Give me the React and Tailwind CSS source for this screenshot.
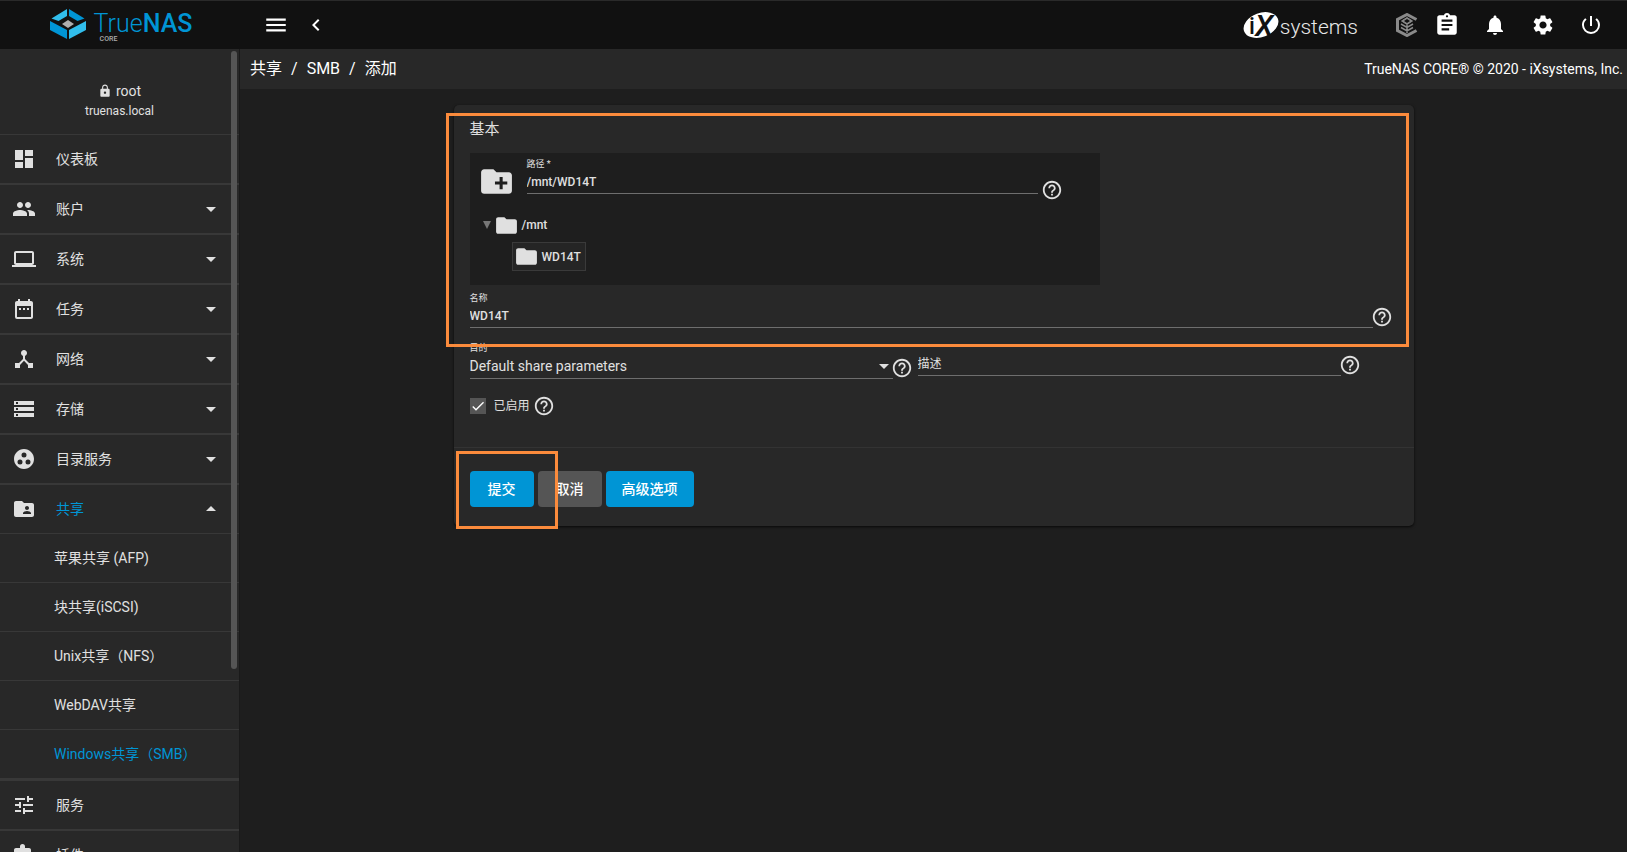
import React, { useState } from 'react';
import {
  MdArrowDropDown, MdArrowDropUp, MdAssignment, MdCheck, MdChevronLeft,
  MdCreateNewFolder, MdDashboard, MdDateRange, MdDeviceHub, MdExtension,
  MdFolder, MdFolderShared, MdGroupWork, MdHelpOutline, MdLaptop, MdLock,
  MdMenu, MdNotifications, MdPeople, MdPowerSettingsNew, MdSettings,
  MdStorage, MdTune
} from 'react-icons/md';

const menuItems = [
  { label: '仪表板', icon: MdDashboard },
  { label: '账户', icon: MdPeople, expandable: true },
  { label: '系统', icon: MdLaptop, expandable: true },
  { label: '任务', icon: MdDateRange, expandable: true },
  { label: '网络', icon: MdDeviceHub, expandable: true },
  { label: '存储', icon: MdStorage, expandable: true },
  { label: '目录服务', icon: MdGroupWork, expandable: true },
  {
    label: '共享',
    icon: MdFolderShared,
    expandable: true,
    open: true,
    children: [
      { label: '苹果共享 (AFP)' },
      { label: '块共享(iSCSI)' },
      { label: 'Unix共享（NFS）' },
      { label: 'WebDAV共享' },
      { label: 'Windows共享（SMB）', active: true },
    ],
  },
  { label: '服务', icon: MdTune },
  { label: '插件', icon: MdExtension, expandable: true },
];

const TrueNasLogo = () => (
  <a href="#home" aria-label="TrueNAS CORE" className="flex items-start">
    <svg width="36" height="30" viewBox="0 0 36 30" className="mt-px">
      <path d="M17 0v7L8.500 12 1.500 9.500z" fill="#31beec" />
      <path d="M19 0v7l8.500 5 7-2.500z" fill="#0095d5" />
      <path d="M0 12l17 9v9L0 21z" fill="#0095d5" />
      <path d="M36 12l-17 9v9l17-9z" fill="#31beec" />
      <path d="M18 11l6 4-6 4-6-4z" fill="#aeaeae" />
    </svg>
    <span className="ml-2 flex flex-col pt-1">
      <span className="text-[25px] leading-6 font-light text-[#0095d5]">
        True<span className="font-medium">NAS</span>
      </span>
      <span className="ml-1.5 text-[7px] leading-[6px] font-medium text-[#aeaeae]">CORE</span>
    </span>
  </a>
);

const IxLogo = () => (
  <a href="#ixsystems" aria-label="iXsystems" className="flex items-center text-[#e8e8e8]">
    <svg width="36" height="42" viewBox="0 0 36 42">
      <ellipse cx="18" cy="21" rx="18" ry="12" fill="#fff" transform="rotate(-20 18 21)" />
      <text x="6" y="30" fontSize="23" fontWeight="500" fill="#111">i</text>
      <text x="12" y="32" fontSize="30" fontWeight="500" fontStyle="italic" fill="#111">X</text>
    </svg>
    <span className="mt-1 ml-px text-[21px] leading-6 font-light">systems</span>
  </a>
);

const TrueCommandIcon = () => (
  <svg width="22" height="24" viewBox="0 0 22 24" fill="none" stroke="#8a8a8a">
    <path d="M20.500 6.500L11 1.500 1.500 6.500v11L11 22.500l9.500-5" strokeWidth="3" />
    <path d="M11 4.500l5.500 3.500L11 11.500 5.500 8z" fill="#8a8a8a" strokeWidth="1" />
    <path d="M11 6l3 2-3 2-3-2z" fill="#111" stroke="none" />
    <path d="M5 11l6 3.500 6-3.500M5 14.500l6 3.500 6-3.500M11 12v8" strokeWidth="1.500" />
  </svg>
);

const HeaderButton = ({ label, children }) => (
  <button type="button" aria-label={label} className="flex w-12 items-center justify-center">
    {children}
  </button>
);

const Header = () => (
  <header className="flex h-[49px] shrink-0 items-center border-t border-[#2a2a2a] bg-[#111111] text-white">
    <div className="flex w-60 shrink-0 justify-center pl-0.5">
      <TrueNasLogo />
    </div>
    <button type="button" aria-label="菜单" className="ml-[23px]"><MdMenu size={26} /></button>
    <button type="button" aria-label="返回" className="ml-[15px]"><MdChevronLeft size={24} /></button>
    <div className="ml-auto flex items-center pr-3">
      <IxLogo />
      <button type="button" aria-label="TrueCommand" className="ml-[38px]"><TrueCommandIcon /></button>
      <div className="ml-[5px] flex">
        <HeaderButton label="任务管理"><MdAssignment size={26} /></HeaderButton>
        <HeaderButton label="通知"><MdNotifications size={24} /></HeaderButton>
        <HeaderButton label="设置"><MdSettings size={24} /></HeaderButton>
        <HeaderButton label="电源"><MdPowerSettingsNew size={24} /></HeaderButton>
      </div>
    </div>
  </header>
);

const MenuItem = ({ item }) => {
  const Icon = item.icon;
  const Arrow = item.open ? MdArrowDropUp : MdArrowDropDown;

  return (
    <li className="border-y border-[#383838]">
      <button type="button" className="flex h-12 w-full items-center pr-4 pl-3 text-left">
        <Icon size={24} />
        <span className={item.open ? 'ml-5 flex-1 text-[#0095d5]' : 'ml-5 flex-1'}>{item.label}</span>
        {item.expandable && <Arrow size={24} />}
      </button>
      {item.children && (
        <ul className="border-t border-[#383838]">
          {item.children.map(child => (
            <li key={child.label} className="border-b border-[#383838]">
              <a
                href="#sharing"
                className={child.active
                  ? 'flex h-12 items-center pl-[54px] text-[#0095d5]'
                  : 'flex h-12 items-center pl-[54px]'}
              >
                {child.label}
              </a>
            </li>
          ))}
        </ul>
      )}
    </li>
  );
};

const Sidebar = () => (
  <aside className="relative w-60 shrink-0 overflow-hidden border-r border-[#1a1a1a] bg-[#282828] text-sm">
    <div className="flex h-[85px] flex-col items-center pt-[33px]">
      <span className="flex items-center gap-1 leading-[18px]"><MdLock size={14} />root</span>
      <span className="text-xs leading-[22px]">truenas.local</span>
    </div>
    <nav>
      <ul>
        {menuItems.map(item => <MenuItem key={item.label} item={item} />)}
      </ul>
    </nav>
    <div className="absolute top-0.5 right-0.5 h-[77%] w-1.5 rounded-full bg-[#555555]" />
  </aside>
);

const Help = () => (
  <button type="button" aria-label="帮助" className="-ml-0.5 shrink-0"><MdHelpOutline size={22} /></button>
);

const TextField = ({ id, label, value, onChange }) => (
  <div className="flex flex-1 flex-col">
    <label htmlFor={id} className="text-[9px] leading-3">{label}</label>
    <input
      id={id}
      type="text"
      value={value}
      onChange={e => onChange(e.target.value)}
      className="h-6 w-full border-b border-[#6e6e6e] bg-transparent text-xs font-medium outline-none"
    />
  </div>
);

const PathExplorer = ({ path, onChange }) => (
  <div className="w-full max-w-[630px] bg-[#1e1e1e] pt-[5px] pb-3.5">
    <div className="flex items-start pr-[37px] pl-2">
      <MdCreateNewFolder size={37} className="mt-[5px] mr-3 shrink-0" />
      <TextField id="path" label="路径 *" value={path} onChange={onChange} />
      <div className="mt-[21px] ml-[5px] flex"><Help /></div>
    </div>
    <ul className="mt-3 text-xs font-medium">
      <li>
        <div className="flex h-6 items-center pl-3">
          <svg width="10" height="8" viewBox="0 0 10 8" className="mr-0.5"><path d="M1 0h8L5 8z" fill="#777" /></svg>
          <MdFolder size={25} />
          <span className="ml-[3px]">/mnt</span>
        </div>
        <ul className="mt-[5px] flex pl-[42px]">
          <li className="flex h-[29px] items-center border border-[#3a3a3a] bg-[#252525] pr-1 pl-px">
            <MdFolder size={25} />
            <span className="ml-[3px]">WD14T</span>
          </li>
        </ul>
      </li>
    </ul>
  </div>
);

const ShareForm = () => {
  const [path, setPath] = useState('/mnt/WD14T');
  const [name, setName] = useState('WD14T');
  const [description, setDescription] = useState('');
  const [enabled, setEnabled] = useState(true);

  return (
    <form
      onSubmit={e => e.preventDefault()}
      className="relative mx-auto max-w-[960px] rounded-[5px] bg-[#282828] shadow-sm shadow-black/60"
    >
      <div className="px-4 pt-3">
        <h2 className="mb-3 text-[15px] leading-6">基本</h2>
        <PathExplorer path={path} onChange={setPath} />
        <div className="mt-[7px] flex items-end pr-[5px]">
          <TextField id="name" label="名称" value={name} onChange={setName} />
          <Help />
        </div>
        <div className="mt-3.5 grid grid-cols-2 items-start pr-8">
          <div className="flex items-end pr-[5px]">
            <div className="flex flex-1 flex-col">
              <label htmlFor="purpose" className="text-[9px] leading-3">目的</label>
              <div className="relative">
                <select
                  id="purpose"
                  className="h-6 w-full appearance-none border-b border-[#6e6e6e] bg-transparent text-sm outline-none"
                >
                  <option>Default share parameters</option>
                </select>
                <MdArrowDropDown size={24} className="pointer-events-none absolute top-0 -right-[3px]" />
              </div>
            </div>
            <Help />
          </div>
          <div className="flex items-end pt-2.5 pr-[5px]">
            <input
              type="text"
              aria-label="描述"
              placeholder="描述"
              value={description}
              onChange={e => setDescription(e.target.value)}
              className="h-6 flex-1 border-b border-[#6e6e6e] bg-transparent text-xs outline-none placeholder:text-[#e0e0e0]"
            />
            <Help />
          </div>
        </div>
        <div className="mt-[15px] flex h-6 items-center">
          <label className="flex items-center text-xs">
            <span className="relative mr-2 flex">
              <input
                type="checkbox"
                checked={enabled}
                onChange={e => setEnabled(e.target.checked)}
                className="size-4 appearance-none bg-[#555555]"
              />
              {enabled && <MdCheck size={16} className="pointer-events-none absolute inset-0 text-white" />}
            </span>
            已启用
          </label>
          <div className="ml-[5px] flex"><Help /></div>
        </div>
      </div>

      <div className="mt-[29px] flex gap-1 border-t border-[#333333] px-4 pt-[23px] pb-[19px] text-sm font-medium text-white">
        <button type="submit" className="h-9 rounded bg-[#0095d5] px-[18px]">提交</button>
        <button type="button" className="h-9 rounded bg-[#555555] px-[18px]">取消</button>
        <button type="button" className="h-9 rounded bg-[#0095d5] px-4">高级选项</button>
      </div>

      {/* highlight frames */}
      <div className="pointer-events-none absolute top-2 right-[5px] -left-2 h-[234px] border-3 border-[#fb8b3c]" />
      <div className="pointer-events-none absolute top-[346px] left-0.5 h-[78px] w-[102px] border-3 border-[#fb8b3c]" />
    </form>
  );
};

const App = () => (
  <div className="flex h-screen flex-col overflow-hidden bg-[#1e1e1e] font-[Roboto,'Noto_Sans_CJK_SC',sans-serif] text-[#e0e0e0]">
    <Header />
    <div className="flex min-h-0 flex-1">
      <Sidebar />
      <div className="min-w-0 flex-1">
        <div className="flex h-10 items-center bg-[#282828] pr-1 pl-2.5 text-white">
          <nav className="flex gap-[9px]">
            <a href="#sharing">共享</a>
            <span>/</span>
            <a href="#smb">SMB</a>
            <span>/</span>
            <span>添加</span>
          </nav>
          <span className="ml-auto text-sm">TrueNAS CORE® © 2020 - iXsystems, Inc.</span>
        </div>
        <main className="px-4 pt-4">
          <ShareForm />
        </main>
      </div>
    </div>
  </div>
);

export default App;
